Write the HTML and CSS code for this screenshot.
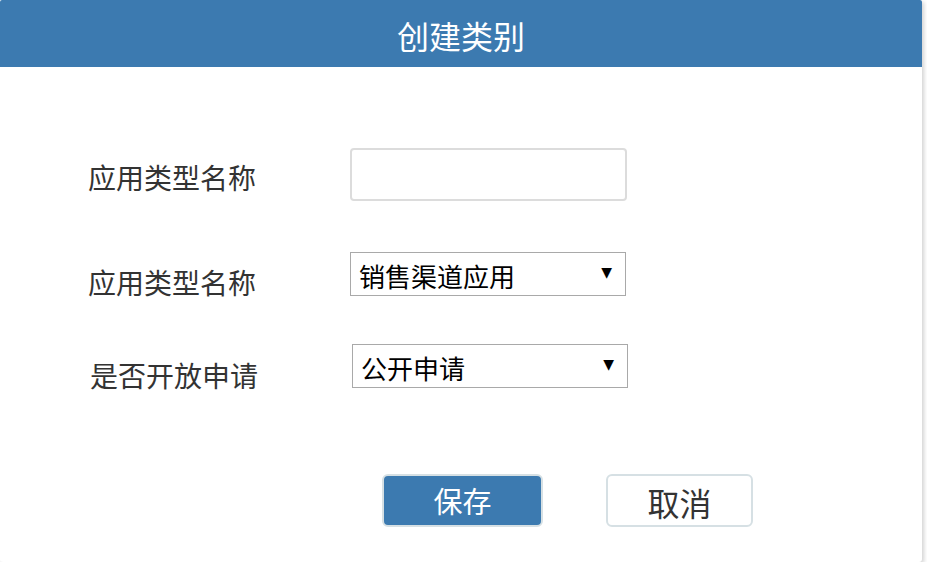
FILE: index.html
```html
<!DOCTYPE html>
<html lang="zh-CN">
<head>
<meta charset="utf-8">
<title>创建类别</title>
<link rel="stylesheet" href="styles.css">
</head>
<body>
<div class="dialog">
  <div class="dialog-header">创建类别</div>
  <div class="dialog-body">
    <div class="row row-name">
      <label class="label">应用类型名称</label>
      <input class="text-input" type="text">
    </div>
    <div class="row row-type">
      <label class="label">应用类型名称</label>
      <div class="select">
        <span class="select-value">销售渠道应用</span>
        <span class="select-arrow">▼</span>
      </div>
    </div>
    <div class="row row-open">
      <label class="label">是否开放申请</label>
      <div class="select">
        <span class="select-value">公开申请</span>
        <span class="select-arrow">▼</span>
      </div>
    </div>
    <div class="actions">
      <button class="btn btn-primary">保存</button>
      <button class="btn btn-default">取消</button>
    </div>
  </div>
</div>
</body>
</html>
```

FILE: styles.css
```css
html, body {
  margin: 0;
  padding: 0;
  background: #ffffff;
}
body {
  font-family: "Noto Sans CJK SC", "Noto Sans", sans-serif;
  color: #333333;
}
.dialog {
  width: 922px;
  height: 562px;
  background: #ffffff;
  box-shadow: 2px 2px 4px rgba(0, 0, 0, 0.18);
  border-radius: 0 0 3px 3px;
}
.dialog-header {
  height: 67px;
  background: #3c7ab0;
  color: #ffffff;
  font-size: 32px;
  line-height: 70px;
  text-align: center;
  border-radius: 2px 2px 0 0;
}
.dialog-body {
  padding: 81px 0 0 88px;
}
.row {
  display: flex;
  align-items: flex-start;
}
.label {
  box-sizing: border-box;
  font-size: 28px;
  line-height: 34px;
  width: 262px;
  flex: none;
  color: #333333;
}
.row-name {
  height: 53px;
}
.row-name .label {
  padding-top: 12px;
}
.text-input {
  box-sizing: border-box;
  width: 277px;
  height: 53px;
  border: 2px solid #dcdcdc;
  border-radius: 4px;
  margin: 0;
  padding: 0 10px;
  font-size: 24px;
}
.row-type {
  height: 44px;
  margin-top: 51px;
}
.row-type .label {
  padding-top: 13px;
}
.row-open {
  height: 44px;
  margin-top: 48px;
}
.row-open .label {
  padding: 14px 0 0 2px;
  width: 264px;
}
.select {
  box-sizing: border-box;
  width: 276px;
  height: 44px;
  border: 1px solid #a9a9a9;
  display: flex;
  align-items: center;
  justify-content: space-between;
  padding: 0 13px 0 8px;
  color: #000000;
}
.select-value {
  font-size: 26px;
  line-height: 42px;
  padding-top: 3px;
}
.select-arrow {
  font-family: "DejaVu Sans", sans-serif;
  font-size: 14px;
  padding-bottom: 4px;
}
.actions {
  display: flex;
  gap: 63px;
  margin-top: 86px;
  padding-left: 294px;
}
.btn {
  box-sizing: border-box;
  height: 53px;
  border: 2px solid #d6e0e4;
  border-radius: 6px;
  font-family: "Noto Sans CJK SC", "Noto Sans", sans-serif;
  font-size: 29px;
  line-height: 1;
  padding: 0;
  cursor: pointer;
}
.btn-primary {
  width: 161px;
  background: #3c7ab0;
  color: #ffffff;
}
.btn-default {
  width: 147px;
  background: #ffffff;
  color: #333333;
  font-size: 32px;
  padding-top: 2px;
}
```
